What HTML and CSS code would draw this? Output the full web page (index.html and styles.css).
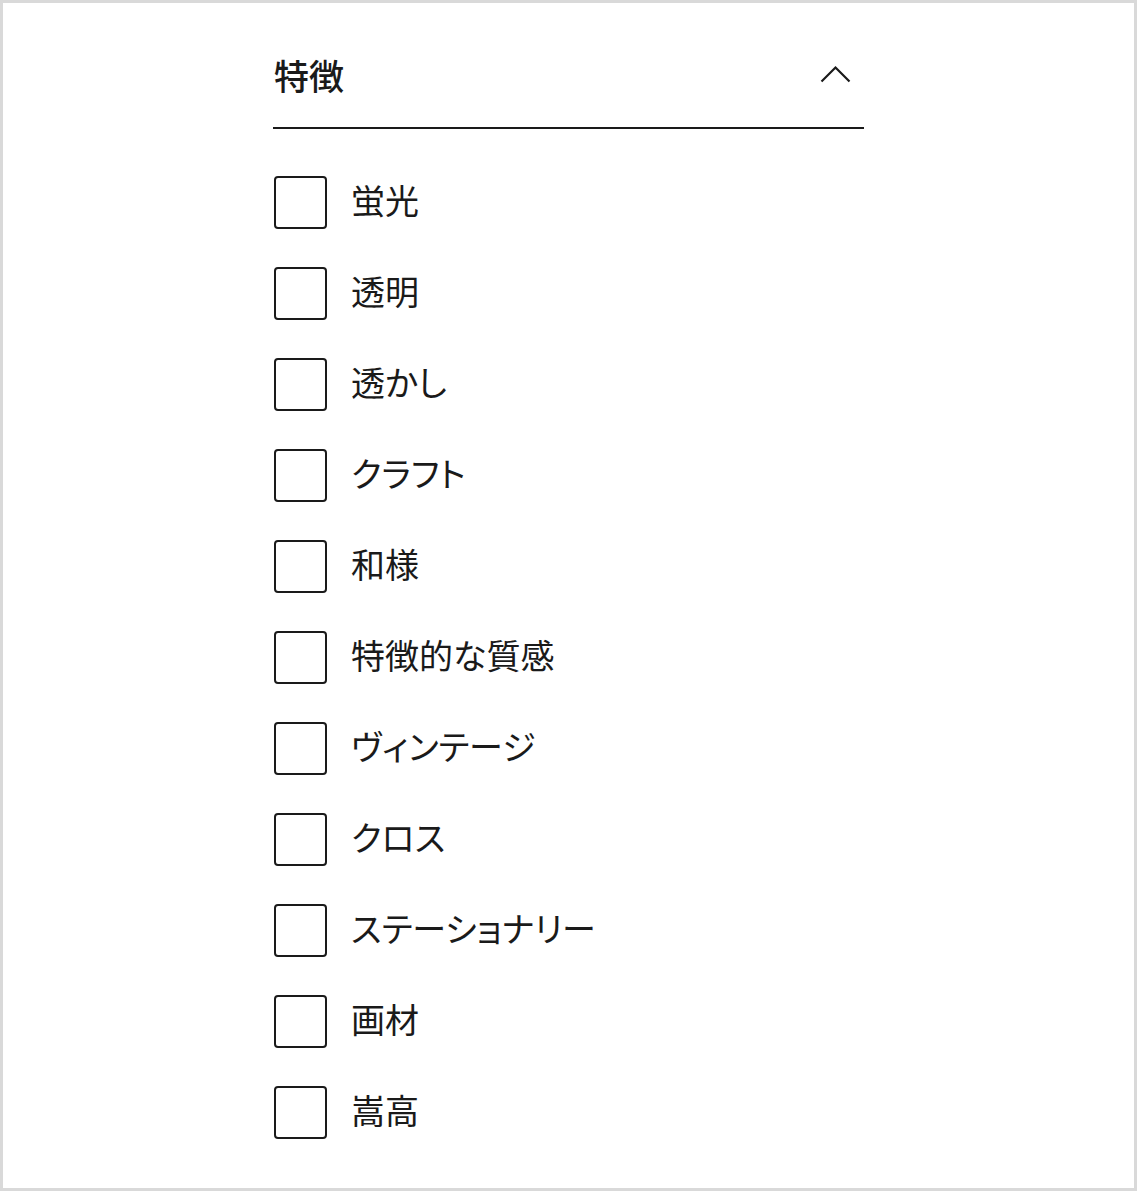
FILE: index.html
```html
<!DOCTYPE html>
<html lang="ja">
<head>
<meta charset="utf-8">
<title>特徴</title>
<link rel="stylesheet" href="styles.css">
</head>
<body>
<div class="frame">
  <section class="filter">
    <div class="filter-head">
      <h2 class="filter-title">特徴</h2>
      <svg class="chevron" width="32" height="18" viewBox="0 0 32 18" aria-hidden="true">
        <polyline points="1.5,16.5 15.5,2.5 29.5,16.5" fill="none" stroke="#1a1a1a" stroke-width="2.2"/>
      </svg>
    </div>
    <ul class="options">
      <li class="option"><span class="box"></span><span class="label">蛍光</span></li>
      <li class="option"><span class="box"></span><span class="label">透明</span></li>
      <li class="option"><span class="box"></span><span class="label">透かし</span></li>
      <li class="option"><span class="box"></span><span class="label">クラフト</span></li>
      <li class="option"><span class="box"></span><span class="label">和様</span></li>
      <li class="option"><span class="box"></span><span class="label">特徴的な質感</span></li>
      <li class="option"><span class="box"></span><span class="label">ヴィンテージ</span></li>
      <li class="option"><span class="box"></span><span class="label">クロス</span></li>
      <li class="option"><span class="box"></span><span class="label">ステーショナリー</span></li>
      <li class="option"><span class="box"></span><span class="label">画材</span></li>
      <li class="option"><span class="box"></span><span class="label">嵩高</span></li>
    </ul>
  </section>
</div>
</body>
</html>
```

FILE: styles.css
```css
html, body {
  margin: 0;
  padding: 0;
  background: #ffffff;
}
.frame {
  box-sizing: border-box;
  width: 1137px;
  height: 1191px;
  border: 3px solid #d9d9d9;
  padding-top: 20px;
  background: #ffffff;
  font-family: "Noto Sans CJK JP", "Noto Sans", sans-serif;
  color: #1a1a1a;
}
.filter {
  width: 591px;
  margin: 0 auto;
}
.filter-head {
  height: 104px;
  display: flex;
  align-items: center;
  justify-content: space-between;
  border-bottom: 2px solid #1a1a1a;
}
.filter-title {
  margin: 0 0 2px 1px;
  font-size: 35px;
  font-weight: 500;
  line-height: 1;
  font-feature-settings: "palt";
}
.chevron {
  display: block;
  margin-right: 12px;
  margin-bottom: 2px;
}
.options {
  list-style: none;
  margin: 47px 0 0 0;
  padding: 0;
  display: flex;
  flex-direction: column;
  gap: 38px;
}
.option {
  display: flex;
  align-items: center;
  gap: 24px;
  height: 53px;
}
.box {
  box-sizing: border-box;
  width: 53px;
  height: 53px;
  margin-left: 1px;
  border: 2px solid #1a1a1a;
  border-radius: 4px;
  flex: none;
}
.label {
  font-size: 34px;
  line-height: 1;
  font-weight: 400;
  margin-bottom: 6px;
  font-feature-settings: "palt";
}
```
